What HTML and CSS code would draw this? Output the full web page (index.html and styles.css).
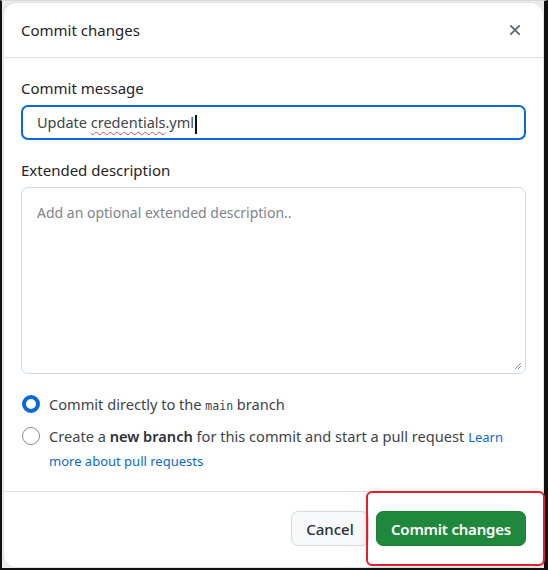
FILE: index.html
```html
<!DOCTYPE html>
<html lang="en">
<head>
<meta charset="utf-8">
<title>Commit changes</title>
<link rel="stylesheet" href="styles.css">
</head>
<body>
<div class="frame">
  <div class="dialog">
    <div class="dialog-header">
      <h2 class="title">Commit changes</h2>
      <button class="close" aria-label="Close">
        <svg viewBox="0 0 16 16" width="18" height="18"><path fill="#59636e" d="M3.72 3.72a.75.75 0 0 1 1.06 0L8 6.94l3.22-3.22a.749.749 0 0 1 1.275.326.749.749 0 0 1-.215.734L9.06 8l3.22 3.22a.749.749 0 0 1-.326 1.275.749.749 0 0 1-.734-.215L8 9.06l-3.22 3.22a.751.751 0 0 1-1.042-.018.751.751 0 0 1-.018-1.042L6.94 8 3.720 4.78a.75.75 0 0 1 0-1.06Z"/></svg>
      </button>
    </div>
    <div class="dialog-body">
      <div class="field">
        <label class="label">Commit message</label>
        <div class="input focused"><span class="value">Update <span class="misspelt">credentials</span>.yml</span><span class="caret"></span></div>
      </div>
      <div class="field">
        <label class="label">Extended description</label>
        <div class="textarea">
          <span class="placeholder">Add an optional extended description..</span>
          <svg class="grip" viewBox="0 0 10 10" width="10" height="10"><path d="M9 3 3 9M9 6 6 9" stroke="#8c959f" stroke-width="1" fill="none"/></svg>
        </div>
      </div>
      <div class="choices">
        <div class="choice">
          <span class="radio checked"></span>
          <p class="choice-text">Commit directly to the <code>main</code> branch</p>
        </div>
        <div class="choice">
          <span class="radio"></span>
          <p class="choice-text">Create a <strong>new branch</strong> for this commit and start a pull request <a href="#">Learn more about pull requests</a></p>
        </div>
      </div>
    </div>
    <div class="dialog-footer">
      <button class="btn btn-default">Cancel</button>
      <button class="btn btn-primary">Commit changes</button>
    </div>
    <div class="highlight"></div>
  </div>
</div>
</body>
</html>
```

FILE: styles.css
```css
* { box-sizing: border-box; }
html, body { margin: 0; padding: 0; }
body {
  width: 548px;
  height: 570px;
  background: #000;
  font-family: "Noto Sans", "Open Sans", sans-serif;
  color: #1f2328;
}
.frame {
  width: 548px;
  height: 570px;
  border-left: 2px solid #111;
  border-right: 4px solid #111;
  border-bottom: 2px solid #111;
  border-top: 1px solid #d9d9d9;
  background: #ececec;
  padding: 2px 1px 1px 2px;
}
.dialog {
  position: relative;
  height: 100%;
  background: #fff;
  border-radius: 12px;
  display: flex;
  flex-direction: column;
  box-shadow: 0 0 0 1px #e2e2e2;
}
.dialog-header {
  height: 55px;
  display: flex;
  align-items: center;
  justify-content: space-between;
  padding: 0 17px 0 17px;
  border-bottom: 1px solid #dfe3e8;
  flex: none;
}
.title {
  margin: 0;
  font-size: 15px;
  font-weight: 400;
  color: #1f2328;
}
.close {
  border: 0;
  background: none;
  padding: 0;
  width: 26px;
  height: 26px;
  display: flex;
  align-items: center;
  justify-content: center;
  margin-right: -2px;
}
.dialog-body {
  padding: 20px 17px 19px 17px;
  border-bottom: 1px solid #dfe3e8;
  flex: none;
}
.field { display: flex; flex-direction: column; margin-bottom: 20px; }
.label {
  font-size: 15px;
  font-weight: 400;
  line-height: 20px;
  margin-bottom: 7px;
  color: #1f2328;
}
.input {
  height: 35px;
  border: 2px solid #0969da;
  border-radius: 7px;
  padding: 0 14px;
  font-size: 14.5px;
  line-height: 31px;
  color: #3d434b;
  white-space: nowrap;
}
.misspelt {
  text-decoration: underline wavy #e5484d;
  text-decoration-thickness: 1px;
  text-underline-offset: 3px;
}
.caret {
  display: inline-block;
  width: 1.5px;
  height: 19px;
  background: #111;
  margin-left: 1px;
  vertical-align: middle;
}
.textarea {
  position: relative;
  height: 187px;
  border: 1px solid #d1d9e0;
  border-radius: 7px;
  padding: 14px 15px;
  font-size: 14px;
  line-height: 22px;
}
.placeholder { color: #7d848c; }
.grip { position: absolute; right: 3px; bottom: 3px; }
.choices { display: flex; flex-direction: column; gap: 8px; margin-top: -2px; }
.choice {
  display: flex;
  align-items: flex-start;
  gap: 9px;
  font-size: 14.6px;
  line-height: 24px;
  color: #3d434b;
}
.choice-text { margin: 0; }
.radio {
  flex: none;
  width: 18px;
  height: 18px;
  border-radius: 50%;
  border: 1.5px solid #818b98;
  margin-top: 3px;
  margin-left: 1px;
  background: #fff;
}
.radio.checked { border: 4.5px solid #0969da; }
.choice-text code {
  font-family: "DejaVu Sans Mono", "Liberation Mono", monospace;
  font-size: 11.5px;
  line-height: 1;
}
.choice-text strong { font-weight: 600; color: #2b3036; line-height: 1; }
.choice-text a {
  color: #0969da;
  text-decoration: none;
  font-size: 13px;
  line-height: 1;
}
.dialog-footer {
  flex: 1;
  display: flex;
  justify-content: flex-end;
  align-items: center;
  gap: 7px;
  padding: 0 17px 2px 0;
}
.btn {
  height: 35px;
  border-radius: 7px;
  font-family: inherit;
  font-size: 15px;
  padding: 0 6px;
  white-space: nowrap;
}
.btn-default {
  width: 78px;
  background: #f6f8fa;
  border: 1px solid #d5d9de;
  color: #2b3036;
  font-weight: 500;
}
.btn-primary {
  width: 150px;
  background: #1f883d;
  border: 1px solid #1a7f37;
  color: #fff;
  font-weight: 600;
  letter-spacing: -0.2px;
}
.highlight {
  position: absolute;
  left: 362px;
  top: 488px;
  width: 179px;
  height: 75px;
  border: 2px solid #e0202a;
  border-radius: 6px;
  box-shadow: 0 0 6px rgba(0,0,0,0.12);
  pointer-events: none;
}
```
